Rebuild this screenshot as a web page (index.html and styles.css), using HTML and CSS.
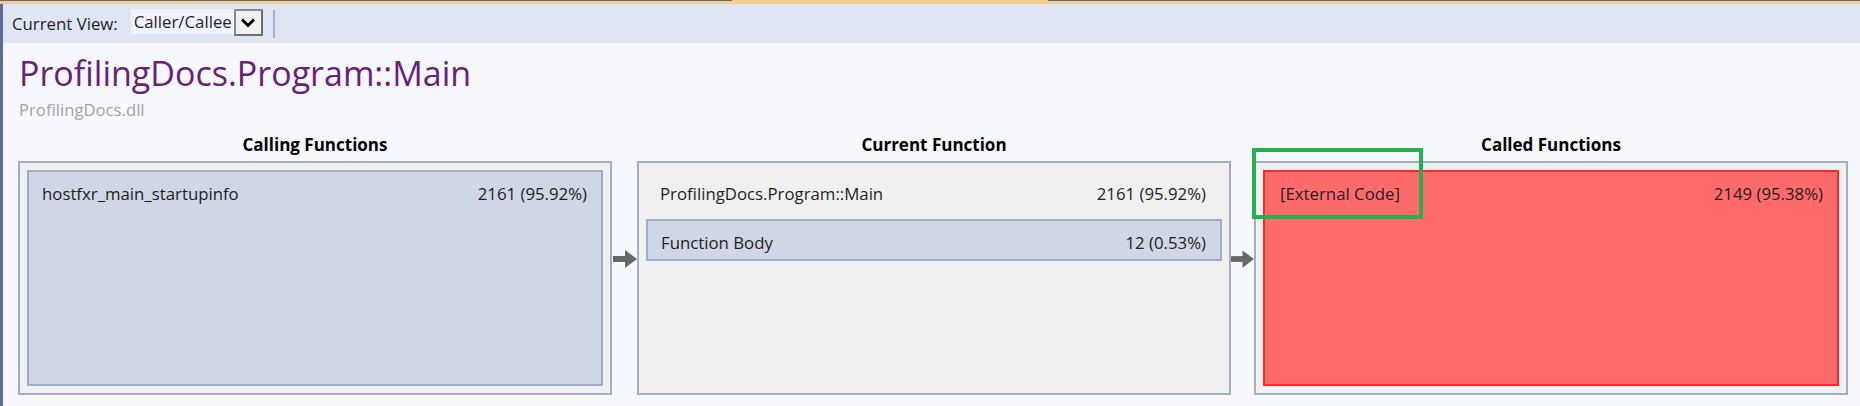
FILE: index.html
```html
<!DOCTYPE html>
<html>
<head>
<meta charset="utf-8">
<link rel="stylesheet" href="styles.css">
</head>
<body>
<div class="window">
  <div class="tabline"></div>
  <div class="main">
    <div class="toolbar">
      <span class="label">Current View:</span>
      <div class="select">
        <span class="select-value">Caller/Callee</span>
        <span class="select-btn"><svg width="16" height="11" viewBox="0 0 16 11"><path d="M2 2.5 L8 8.5 L14 2.5" fill="none" stroke="#000" stroke-width="2.8"/></svg></span>
      </div>
      <span class="sep"></span>
    </div>
    <div class="content">
      <h1 class="title">ProfilingDocs.Program::Main</h1>
      <div class="module">ProfilingDocs.dll</div>
      <div class="graph">
        <div class="col-head">Calling Functions</div>
        <div class="gap-head"></div>
        <div class="col-head">Current Function</div>
        <div class="gap-head"></div>
        <div class="col-head">Called Functions</div>

        <div class="panel">
          <div class="item item-blue fill"><span>hostfxr_main_startupinfo</span><span>2161 (95.92%)</span></div>
        </div>
        <div class="arrow"><svg width="24" height="18" viewBox="0 0 24 18"><rect x="0" y="6" width="13" height="6" fill="#686868"/><polygon points="12,0 24,9 12,18" fill="#686868"/></svg></div>
        <div class="panel">
          <div class="item item-plain"><span>ProfilingDocs.Program::Main</span><span>2161 (95.92%)</span></div>
          <div class="item item-blue"><span>Function Body</span><span>12 (0.53%)</span></div>
        </div>
        <div class="arrow"><svg width="24" height="18" viewBox="0 0 24 18"><rect x="0" y="6" width="13" height="6" fill="#686868"/><polygon points="12,0 24,9 12,18" fill="#686868"/></svg></div>
        <div class="panel panel-called">
          <div class="item item-red fill"><span>[External Code]</span><span>2149 (95.38%)</span></div>
          <div class="highlight"></div>
        </div>
      </div>
    </div>
  </div>
</div>
</body>
</html>
```
FILE: styles.css
```css
html, body {
  margin: 0;
  padding: 0;
  height: 100%;
}
body {
  font-family: "Open Sans", "Noto Sans", sans-serif;
  background: #f7f8fe;
  color: #1e1e1e;
}
.window {
  height: 406px;
  display: flex;
  flex-direction: column;
}
.tabline {
  height: 4px;
  flex: none;
  background: linear-gradient(to right, #5c6b9c 0, #5c6b9c 732px, #f5cd86 732px, #f5cd86 1048px, #5c6b9c 1048px) top left / 100% 1px no-repeat, #f5cd86;
}
.main {
  flex: 1;
  border-left: 3px solid #5c6b9c;
  display: flex;
  flex-direction: column;
  background: #f7f8fe;
}
.toolbar {
  height: 39px;
  flex: none;
  background: #dfe5f2;
  display: flex;
  align-items: center;
  padding-left: 9px;
  font-size: 16.8px;
}
.label {
  color: #1e1e1e;
  margin-right: 13px;
  margin-top: -1px;
}
.select {
  display: flex;
  align-items: flex-start;
  height: 27px;
  margin-top: -2px;
}
.select-value {
  background: #eef3fd;
  height: 25px;
  line-height: 25px;
  padding: 0 2px 0 3px;
  color: #1e1e1e;
}
.select-btn {
  box-sizing: border-box;
  width: 29px;
  height: 27px;
  background: #f0f0f0;
  border: 2px solid #6e6e6e;
  border-top-color: #8a8a8a;
  border-left-color: #8a8a8a;
  display: flex;
  align-items: center;
  justify-content: center;
}
.sep {
  width: 2px;
  height: 28px;
  background: #a5b2cf;
  margin-left: 10px;
  margin-top: 1px;
}
.content {
  flex: 1;
  padding: 0 12px 0 15px;
  display: flex;
  flex-direction: column;
}
.title {
  margin: 10px 0 0 1px;
  font-size: 34px;
  font-weight: 400;
  line-height: 40px;
  color: #68217a;
}
.module {
  margin: 7px 0 0 1px;
  font-size: 16.7px;
  line-height: 20px;
  color: #a3a3a3;
}
.graph {
  margin-top: 15px;
  display: grid;
  grid-template-columns: 1fr 25px 1fr 23px 1fr;
  grid-template-rows: 20px 234px;
  row-gap: 6px;
}
.col-head {
  text-align: center;
  font-weight: 700;
  font-size: 17px;
  line-height: 20px;
  color: #000;
}
.panel {
  position: relative;
  box-sizing: border-box;
  border: 2px solid #a3afc6;
  background: #f0f0f0;
  padding: 7px;
  display: flex;
  flex-direction: column;
  gap: 7px;
}
.item {
  box-sizing: border-box;
  height: 42px;
  display: flex;
  justify-content: space-between;
  align-items: flex-start;
  padding: 10px 14px 0 13px;
  font-size: 16.8px;
  line-height: 24px;
  color: #1e1e1e;
  border: 2px solid transparent;
}
.item.fill {
  flex: 1;
  height: auto;
}
.item-plain {
  padding-left: 12px;
}
.item-blue {
  background: #cfd6e5;
  border-color: #9fadc7;
}
.item-red {
  background: #ff6b6b;
  border-color: #ff2727;
  padding-left: 15px;
}
.arrow {
  display: flex;
  justify-content: center;
  align-items: flex-start;
  padding-top: 89px;
}
.highlight {
  position: absolute;
  left: -4px;
  top: -15px;
  width: 171px;
  height: 71px;
  box-sizing: border-box;
  border: 4px solid #22b14c;
}
```
